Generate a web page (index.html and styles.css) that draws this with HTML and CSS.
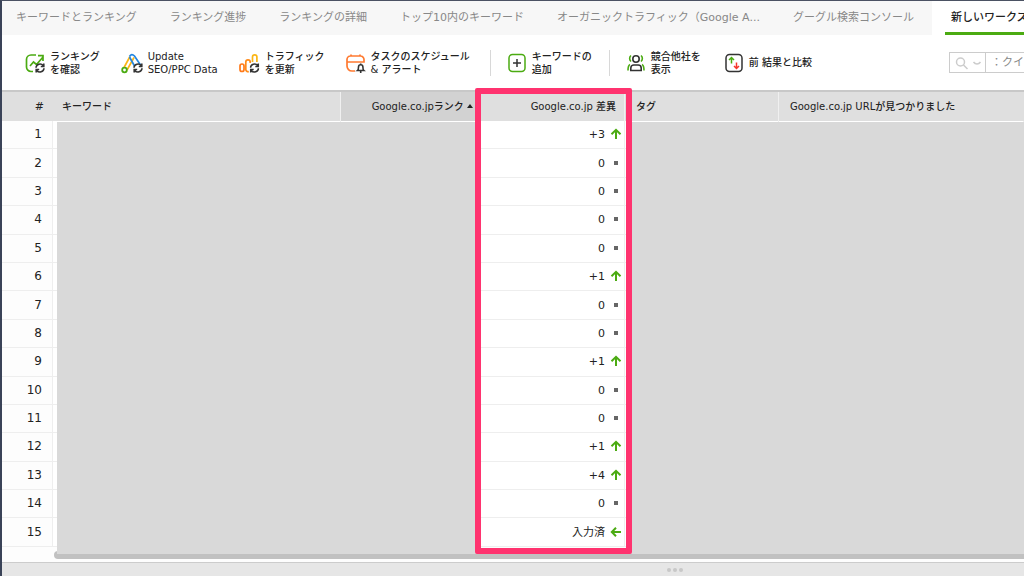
FILE: index.html
```html
<!DOCTYPE html>
<html lang="ja">
<head>
<meta charset="utf-8">
<title>ランキング</title>
<link rel="stylesheet" href="styles.css">
</head>
<body>
<svg class="defs" aria-hidden="true">
  <symbol id="sync" viewBox="0 0 10 10"><path d="M1 4.700A4 4 0 0 1 8.200 2.600M9 5.300A4 4 0 0 1 1.800 7.400M8.800.5v3H5.800M1.200 9.500v-3H4.200" fill="none" stroke="#333" stroke-width="1.600"/></symbol>
  <symbol id="up" viewBox="0 0 12 12"><path d="M6 11V2M1.500 6.200L6 1.800l4.500 4.400" fill="none" stroke="#4bab12" stroke-width="2"/></symbol>
  <symbol id="left" viewBox="0 0 12 12"><path d="M11 6H2M6 1.800L1.800 6 6 10.200" fill="none" stroke="#4bab12" stroke-width="2"/></symbol>
  <symbol id="same" viewBox="0 0 12 12"><path d="M4 4h4v4H4z" fill="#666"/></symbol>
</svg>
<div class="app">
  <nav class="tabs">
    <a href="#">キーワードとランキング</a>
    <a href="#">ランキング進捗</a>
    <a href="#">ランキングの詳細</a>
    <a href="#">トップ10内のキーワード</a>
    <a href="#">オーガニックトラフィック（Google A...</a>
    <a href="#">グーグル検索コンソール</a>
    <a href="#" class="active" aria-current="page"><span>新しいワークス</span></a>
  </nav>
  <div class="toolbar">
    <div class="group">
      <button class="tool">
        <svg width="20" height="22" viewBox="0 0 20 22"><path d="M8 19.500H6A4.500 4.500 0 0 1 1.500 15V7.500A4.500 4.500 0 0 1 6 3h5M5 14l3.500-4 3 2.500L18 5M13 3.700h5V9" fill="none" stroke="#4bab12" stroke-width="1.700"/><use href="#sync" x="10" y="11" width="10" height="10"/></svg>
        <span>ランキング<br>を確認</span>
      </button>
      <button class="tool">
        <svg width="22" height="22" viewBox="0 0 22 22"><path d="M9 4.500L2.500 16.500M13 5.500L6 18" stroke="#fbb615" stroke-width="1.700" fill="none"/><path d="M8.500 4.500Q10.500 1 13.500 4l6 9M8.500 5l5 9" stroke="#2386e0" stroke-width="1.700" fill="none"/><circle cx="3.500" cy="18" r="2.300" stroke="#4bab12" stroke-width="1.800" fill="#fff"/><use href="#sync" x="12" y="11" width="10" height="10"/></svg>
        <span>Update<br>SEO/PPC Data</span>
      </button>
      <button class="tool">
        <svg width="21" height="22" viewBox="0 0 21 22" fill="none" stroke-width="1.700"><rect x="1" y="12" width="4" height="7.500" rx="2" stroke="#ff7a1a"/><path d="M11.200 11v-1a2.200 2.200 0 0 0-4.400 0v7.500a2.200 2.200 0 0 0 3 2" stroke="#ff8c1a"/><path d="M13.500 10V5a2.200 2.200 0 0 1 4.400 0v5" stroke="#fbb615"/><use href="#sync" x="10.500" y="11" width="10" height="10"/></svg>
        <span>トラフィック<br>を更新</span>
      </button>
      <button class="tool">
        <svg width="20" height="22" viewBox="0 0 20 22" fill="none"><path d="M9 19H6a5 5 0 0 1-5-5V7.500A3.500 3.500 0 0 1 4.500 4h10A3.500 3.500 0 0 1 18 7.500V10H1M5 4V2.500M14 4V2.500" stroke="#ff7a30" stroke-width="1.700"/><path d="M11.500 18.500c1-.8 1-2 1-3.500a2.200 2.200 0 0 1 4.400 0c0 1.500 0 2.700 1 3.500zM14.700 18.500V21M14.700 11.500v1.500" stroke="#333" stroke-width="1.600"/></svg>
        <span>タスクのスケジュール<br>&amp; アラート</span>
      </button>
    </div>
    <div class="group">
      <button class="tool">
        <svg width="18" height="22" viewBox="0 0 18 22" fill="none" stroke-width="1.500"><rect x="1" y="2.500" width="16" height="17" rx="3.500" stroke="#4bab12"/><path d="M9 7v8M5 11h8" stroke="#333"/></svg>
        <span>キーワードの<br>追加</span>
      </button>
    </div>
    <div class="group">
      <button class="tool">
        <svg width="18" height="22" viewBox="0 0 18 22" fill="none" stroke-width="1.600"><circle cx="9" cy="7" r="3.200" stroke="#333"/><path d="M3.800 18.500V16a3 3 0 0 1 3-3h4.400a3 3 0 0 1 3 3v2.500z" stroke="#333"/><path d="M4 3.500a4 4 0 0 0 0 6M14 3.500a4 4 0 0 1 0 6M3 12.500Q1 13.500 1 18.500M15 12.500q2 1 2 6" stroke="#4bab12"/></svg>
        <span>競合他社を<br>表示</span>
      </button>
      <button class="tool">
        <svg width="18" height="22" viewBox="0 0 18 22" fill="none" stroke-width="1.500"><rect x="1" y="2.500" width="16" height="17" rx="3.500" stroke="#333"/><path d="M6.500 11.500v-6M4 8l2.500-2.500L9 8" stroke="#4bab12"/><path d="M11.500 10.500v6M9 14l2.500 2.500L14 14" stroke="#f5352a"/></svg>
        <span>前 結果と比較</span>
      </button>
    </div>
    <div class="search">
      <button class="scope" aria-label="検索対象">
        <svg width="28" height="14" viewBox="0 0 28 14" fill="none" stroke="#ccc" stroke-width="1.500"><circle cx="6.500" cy="6" r="4"/><path d="M9.500 9l4 4M19.500 6q1.500 2 3.500 2t3.500-2"/></svg>
      </button>
      <input type="text" aria-label="クイック検索" placeholder="：クイック検索">
    </div>
  </div>
  <main class="grid">
    <table>
      <colgroup><col class="c-num"><col class="c-key"><col class="c-rank"><col class="c-diff"><col class="c-tag"><col></colgroup>
      <thead>
        <tr><th class="num">#</th><th class="key">キーワード</th><th class="rank">Google.co.jpランク <svg width="6" height="4"><path d="M0 4L3 0l3 4z" fill="#222"/></svg></th><th class="diff">Google.co.jp 差異</th><th class="tag">タグ</th><th class="url">Google.co.jp URLが見つかりました</th></tr>
      </thead>
      <tbody>
        <tr><td class="num">1</td><td></td><td></td><td class="diff">+3<svg><use href="#up"/></svg></td><td></td><td></td></tr>
        <tr><td class="num">2</td><td></td><td></td><td class="diff">0<svg><use href="#same"/></svg></td><td></td><td></td></tr>
        <tr><td class="num">3</td><td></td><td></td><td class="diff">0<svg><use href="#same"/></svg></td><td></td><td></td></tr>
        <tr><td class="num">4</td><td></td><td></td><td class="diff">0<svg><use href="#same"/></svg></td><td></td><td></td></tr>
        <tr><td class="num">5</td><td></td><td></td><td class="diff">0<svg><use href="#same"/></svg></td><td></td><td></td></tr>
        <tr><td class="num">6</td><td></td><td></td><td class="diff">+1<svg><use href="#up"/></svg></td><td></td><td></td></tr>
        <tr><td class="num">7</td><td></td><td></td><td class="diff">0<svg><use href="#same"/></svg></td><td></td><td></td></tr>
        <tr><td class="num">8</td><td></td><td></td><td class="diff">0<svg><use href="#same"/></svg></td><td></td><td></td></tr>
        <tr><td class="num">9</td><td></td><td></td><td class="diff">+1<svg><use href="#up"/></svg></td><td></td><td></td></tr>
        <tr><td class="num">10</td><td></td><td></td><td class="diff">0<svg><use href="#same"/></svg></td><td></td><td></td></tr>
        <tr><td class="num">11</td><td></td><td></td><td class="diff">0<svg><use href="#same"/></svg></td><td></td><td></td></tr>
        <tr><td class="num">12</td><td></td><td></td><td class="diff">+1<svg><use href="#up"/></svg></td><td></td><td></td></tr>
        <tr><td class="num">13</td><td></td><td></td><td class="diff">+4<svg><use href="#up"/></svg></td><td></td><td></td></tr>
        <tr><td class="num">14</td><td></td><td></td><td class="diff">0<svg><use href="#same"/></svg></td><td></td><td></td></tr>
        <tr><td class="num">15</td><td></td><td></td><td class="diff">入力済<svg><use href="#left"/></svg></td><td></td><td></td></tr>
      </tbody>
    </table>
    <div class="scrollbar"></div>
    <div class="mask mask-left"></div>
    <div class="mask mask-right"></div>
    <div class="highlight"></div>
  </main>
  <footer class="splitter"><i></i><i></i><i></i></footer>
</div>
</body>
</html>
```
FILE: styles.css
```css
* { box-sizing: border-box; }
body {
  margin: 0;
  overflow: hidden;
  color: #222;
  font: 10px/13px "DejaVu Sans", "Noto Sans CJK JP", sans-serif;
}
button, input { font: inherit; color: inherit; }
.defs { position: absolute; width: 0; height: 0; }
.app {
  display: flex;
  flex-direction: column;
  height: 100vh;
  border-top: 1px solid #4b5263;
  border-left: 2px solid #3a4358;
  background: #fff;
}
.tabs {
  display: flex;
  flex: none;
  height: 34px;
  gap: 33px;
  padding-left: 14px;
  background: #f7f7f7;
  font-size: 11px;
  line-height: 34px;
  white-space: nowrap;
}
.tabs a { flex: none; color: #888; text-decoration: none; }
.tabs .active {
  flex: 1 0 90px;
  min-width: 0;
  margin-left: -15px;
  padding-left: 13px;
  background: #fff;
  color: #222;
  font-weight: 500;
}
.active span {
  display: block;
  height: 34px;
  padding-left: 6px;
  border-bottom: 3px solid #4bab12;
}
.toolbar {
  display: flex;
  flex: none;
  align-items: center;
  height: 55px;
  padding-left: 6px;
  white-space: nowrap;
}
.group { display: flex; gap: 21px; padding: 0 17px; }
.group:first-child { padding-right: 20px; }
.group + .group { gap: 24px; border-left: 1px solid #d8d8d8; }
.tool {
  display: flex;
  align-items: center;
  gap: 5px;
  padding: 0;
  border: 0;
  background: none;
  font-weight: 500;
  text-align: left;
}
.group + .group .tool { gap: 6px; }
.tool svg { flex: none; }
.search {
  display: flex;
  flex: none;
  width: 75px;
  height: 21px;
  margin-left: auto;
  border: 1px solid #ccc;
  border-right: 0;
}
.scope { flex: none; width: 36px; padding: 0 2px 0 4px; border: 0; border-right: 1px solid #ccc; background: none; }
.scope svg { display: block; }
.search input { flex: 1; min-width: 0; padding: 0 0 0 5px; border: 0; font-size: 11px; }
.search input::placeholder { color: #888; opacity: 1; }
.grid { position: relative; flex: 1; min-height: 0; border-top: 2px solid #c8c8c8; background: #fdfdfd; }
table {
  width: 100%;
  height: calc(100% - 15px);
  table-layout: fixed;
  border-collapse: separate;
  border-spacing: 0;
}
.c-num { width: 51px; }
.c-key { width: 288px; }
.c-rank { width: 139px; }
.c-diff { width: 145px; }
.c-tag { width: 154px; }
th {
  height: 29px;
  padding: 0 8px;
  border-right: 1px solid #f0f0f0;
  background: #dfdfdf;
  font-weight: 500;
  text-align: left;
}
th:last-child { border-right: 0; }
td { padding: 0; border-right: 1px solid #eee; border-bottom: 1px solid #eee; background: #fff; font-size: 12px; }
th.num { padding-right: 9px; border-right: 0; font-size: 11px; text-align: right; }
td.num { padding-right: 10px; background: #fdfdfd; text-align: right; }
th.key { padding-left: 9px; }
th.rank { padding-right: 6px; background: #d2d2d2; text-align: right; }
th.rank svg { vertical-align: 2px; }
th.diff { text-align: right; }
td.diff { padding-right: 2px; font-size: 11px; text-align: right; }
td.diff svg { width: 12px; height: 12px; margin-left: 5px; vertical-align: -2px; }
th.tag, th.url { padding-left: 11px; }
.mask { position: absolute; top: 30px; bottom: 8px; background: #d9d9d9; }
.mask-left { left: 55px; width: 420px; }
.mask-right { left: 628px; right: 0; }
.scrollbar { position: absolute; left: 52px; right: 0; bottom: 3px; height: 8px; border-radius: 4px 0 0 4px; background: #c1c1c1; }
.highlight { position: absolute; top: -4px; bottom: 8px; left: 473px; width: 157px; border: 6px solid #ff336f; border-radius: 2px; }
.splitter {
  display: flex;
  flex: none;
  align-items: center;
  justify-content: center;
  gap: 2px;
  height: 14px;
  padding-left: 324px;
  border-top: 1px solid #ccc;
  background: #e6e6e6;
}
.splitter i { width: 4px; height: 4px; border-radius: 2px; background: #c8c8c8; }
```
